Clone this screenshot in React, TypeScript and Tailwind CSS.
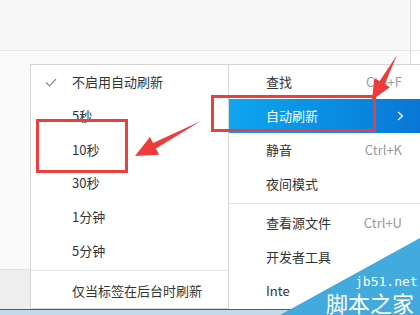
import React from "react";

const font = { fontFamily: '"Noto Sans CJK SC", "Noto Sans", sans-serif' };

function LeftItem({ label, check }: { label: string; check?: boolean }) {
  return (
    <div className="h-[34px] flex items-center relative pl-[41px] text-[13px] text-[#333]">
      {check && (
        <svg className="absolute left-[14px] top-[13px]" width="12" height="9" viewBox="0 0 12 9">
          <path d="M1 4.5 L4.5 8 L11 1" fill="none" stroke="#888" strokeWidth="1.2" />
        </svg>
      )}
      {label}
    </div>
  );
}

function RightItem({ label, sc, active }: { label: string; sc?: string; active?: boolean }) {
  return (
    <div
      className={
        active
          ? "h-[34px] flex items-center justify-between pl-[37px] pr-[20px] text-[13px] text-white bg-gradient-to-r from-[#0fa6f0] to-[#0a76d6]"
          : "h-[34px] flex items-center justify-between pl-[37px] pr-[20px] text-[13px] text-[#333]"
      }
    >
      <span>{label}</span>
      {sc && <span className="text-[#9a9a9a]">{sc}</span>}
      {active && (
        <svg width="7" height="10" viewBox="0 0 7 10" className="mr-[-2px]">
          <path d="M1 1 L5.5 5 L1 9" fill="none" stroke="#fff" strokeWidth="1.2" />
        </svg>
      )}
    </div>
  );
}

export default function App() {
  return (
    <div className="w-[420px] h-[315px] relative overflow-hidden bg-[#fafafa]" style={font}>
      <div className="flex flex-col h-full">
        <div className="h-[51px] bg-[#f7f7f7] border-b border-[#e6e6e6] flex">
          <div className="flex-1" />
          <div className="w-[10px] border-l border-[#dcdcdc] bg-white" />
        </div>
        <div className="flex-1 flex">
          <div className="flex-1" />
          <div className="w-[10px] border-l border-[#dcdcdc] bg-white" />
        </div>
        <div className="h-[40px] bg-[#eeeeee] border-t border-[#e2e2e2]" />
        <div className="h-[6px] bg-[#c4d9ec] border-t border-[#555a60]" />
      </div>

      {/* left submenu */}
      <div className="absolute left-[30px] top-[64px] w-[199px] h-[245px] bg-white border border-[#d6d6d6] flex flex-col">
        <LeftItem label="不启用自动刷新" check />
        <LeftItem label="5秒" />
        <LeftItem label="10秒" />
        <LeftItem label="30秒" />
        <LeftItem label="1分钟" />
        <LeftItem label="5分钟" />
        <div className="my-[3px] border-t border-[#e3e3e3]" />
        <LeftItem label="仅当标签在后台时刷新" />
      </div>

      {/* right menu */}
      <div className="absolute left-[228px] top-[64px] w-[194px] h-[245px] bg-white border-l border-t border-[#d6d6d6] flex flex-col">
        <RightItem label="查找" sc="Ctrl+F" />
        <RightItem label="自动刷新" active />
        <RightItem label="静音" sc="Ctrl+K" />
        <RightItem label="夜间模式" />
        <div className="my-[2px] border-t border-[#e3e3e3]" />
        <RightItem label="查看源文件" sc="Ctrl+U" />
        <RightItem label="开发者工具" />
        <RightItem label="Inte" />
      </div>

      {/* annotations */}
      <div className="absolute left-[211px] top-[95px] w-[165px] h-[37px] border-[3px] border-[#e8403f]" />
      <div className="absolute left-[36px] top-[119px] w-[92px] h-[54px] border-[3px] border-[#e8403f]" />
      <svg className="absolute left-0 top-0" width="420" height="315" viewBox="0 0 420 315">
        <polygon
          points="397,55 384.7,84.2 389.9,87.2 372,100 374.3,78.2 379.5,81.2"
          fill="#ef3b3a"
        />
        <polygon
          points="201,121 155.9,148.5 159.1,154.7 135,156 149.9,136.9 153.1,143.1"
          fill="#ef3b3a"
        />
        <polygon points="280,315 420,238 420,315" fill="#43aade" />
      </svg>

      {/* watermark */}
      <div className="absolute left-[355px] top-[274px] text-[13px] leading-[16px] text-white" style={{ fontFamily: '"DejaVu Sans Mono", monospace' }}>
        jb51.net
      </div>
      <div className="absolute left-[326px] top-[290px] text-[22px] leading-[24px] text-white">
        脚本之家
      </div>
    </div>
  );
}
